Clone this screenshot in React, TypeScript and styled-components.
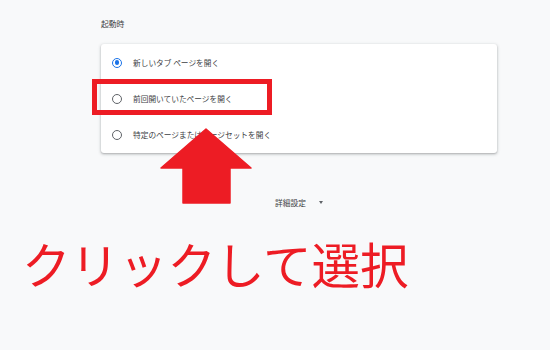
import React, { FC } from 'react'
import styled, { createGlobalStyle } from 'styled-components'

const GlobalStyle = createGlobalStyle`
	html, body {
		margin: 0;
		padding: 0;
		background: #f8f9fa;
		font-family: 'Noto Sans CJK JP', 'Noto Sans', sans-serif;
	}
`

const Page = styled.div`
	width: 550px;
	height: 350px;
	overflow: hidden;
	background: #f8f9fa;
`

const Main = styled.section`
	padding: 16px 0 0 101px;
	width: 396px;
`

const SectionTitle = styled.h2`
	margin: 0;
	font-size: 7.8px;
	line-height: 16px;
	font-weight: 400;
	color: #3c4043;
`

const Card = styled.div`
	position: relative;
	margin-top: 12px;
	padding: 0.5px 0;
	background: #fff;
	border-radius: 3px;
	box-shadow: 0 1px 2px rgba(60, 64, 67, 0.3), 0 1px 3px 1px rgba(60, 64, 67, 0.12);
`

const Row = styled.label`
	display: flex;
	align-items: center;
	gap: 11px;
	height: 36px;
	padding-left: 11px;
	font-size: 7.7px;
	color: #3c4043;
`

const Radio = styled.span<{ $checked?: boolean }>`
	box-sizing: border-box;
	width: 10px;
	height: 10px;
	border-radius: 50%;
	border: 1.4px solid ${({ $checked }) => ($checked ? '#1a73e8' : '#5f6368')};
	display: flex;
	align-items: center;
	justify-content: center;

	&::after {
		content: '';
		width: 4.6px;
		height: 4.6px;
		border-radius: 50%;
		background: ${({ $checked }) => ($checked ? '#1a73e8' : 'transparent')};
	}
`

const Highlight = styled.div`
	position: absolute;
	left: -9px;
	top: 35px;
	width: 180px;
	height: 36px;
	box-sizing: border-box;
	border: 5px solid #ed1c24;
	pointer-events: none;
`

const Arrow = styled.svg`
	position: absolute;
	left: 59px;
	top: 84px;
	overflow: visible;
`

const Advanced = styled.div`
	display: flex;
	justify-content: center;
	align-items: center;
	gap: 13px;
	margin-top: 41px;
	height: 16px;
	font-size: 7.7px;
	color: #3c4043;
`

const Caret = styled.span`
	width: 0;
	height: 0;
	border-left: 2.5px solid transparent;
	border-right: 2.5px solid transparent;
	border-top: 3px solid #5f6368;
`

const Caption = styled.div`
	margin: 29px 0 0 22px;
	font-size: 48.5px;
	line-height: 48px;
	color: #ed1c24;
	white-space: nowrap;
`

const options = [
	{ label: '新しいタブ ページを開く', checked: true },
	{ label: '前回開いていたページを開く', checked: false },
	{ label: '特定のページまたはページセットを開く', checked: false },
]

const App: FC = () => (
	<Page>
		<GlobalStyle />
		<Main>
			<SectionTitle>起動時</SectionTitle>
			<Card>
				{options.map(o => (
					<Row key={o.label}>
						<Radio $checked={o.checked} />
						{o.label}
					</Row>
				))}
				<Highlight />
				<Arrow width="92" height="76" viewBox="0 0 92 76">
					<polygon
						points="46,1 91,40 70,40 70,75 23,75 23,40 1,40"
						fill="#ed1c24"
						stroke="#ed1c24"
						strokeWidth="1.5"
						strokeLinejoin="round"
					/>
				</Arrow>
			</Card>
			<Advanced>
				詳細設定
				<Caret />
			</Advanced>
		</Main>
		<Caption>クリックして選択</Caption>
	</Page>
)

export default App
